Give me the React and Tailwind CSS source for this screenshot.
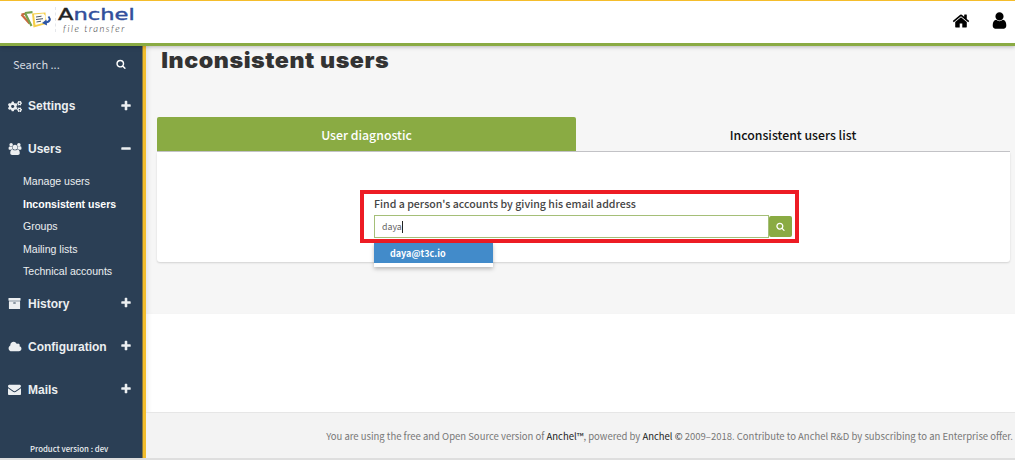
import React from "react";
import { FaCogs } from "react-icons/fa";

const PATHS = {
  plus: [1792, "M1600 736v192q0 40-28 68t-68 28h-416v416q0 40-28 68t-68 28h-192q-40 0-68-28t-28-68v-416h-416q-40 0-68-28t-28-68v-192q0-40 28-68t68-28h416v-416q0-40 28-68t68-28h192q40 0 68 28t28 68v416h416q40 0 68 28t28 68z"],
  minus: [1792, "M1600 736v192q0 40-28 68t-68 28h-1216q-40 0-68-28t-28-68v-192q0-40 28-68t68-28h1216q40 0 68 28t28 68z"],
  search: [1792, "M1216 832q0-185-131.5-316.5t-316.5-131.5-316.5 131.5-131.5 316.5 131.5 316.5 316.5 131.5 316.5-131.5 131.5-316.5zm512 832q0 52-38 90t-90 38q-54 0-90-38l-343-342q-179 124-399 124-143 0-273.5-55.5t-225-150-150-225-55.5-273.5 55.5-273.5 150-225 225-150 273.5-55.5 273.5 55.5 225 150 150 225 55.5 273.5q0 220-124 399l343 343q37 37 37 90z"],
  cloud: [2048, "M1984 1152q0 159-112.5 271.5t-271.5 112.5h-1088q-185 0-316.5-131.5t-131.5-316.5q0-132 71-241.5t187-163.5q-2-28-2-43 0-212 150-362t362-150q158 0 286.5 88t187.5 230q70-62 166-62 106 0 181 75t75 181q0 75-41 138 129 30 213 134.5t84 239.5z"],
  home: [1792, "M1472 992v480q0 26-19 45t-45 19h-384v-384h-256v384h-384q-26 0-45-19t-19-45v-480q0-1 .5-3t.5-3l575-474 575 474q1 2 1 6zm223-69l-62 74q-8 9-21 11h-3q-13 0-21-7l-692-577-692 577q-12 8-24 7-13-2-21-11l-62-74q-8-10-7-23.5t11-21.5l719-599q32-26 76-26t76 26l244 204v-195q0-14 9-23t23-9h192q14 0 23 9t9 23v408l219 182q10 8 11 21.5t-7 23.5z"],
  user: [1792, "M1536 1399q0 109-62.5 187t-150.5 78h-854q-88 0-150.5-78t-62.5-187q0-85 8.5-160.5t31.5-152 58.5-131 94-89 134.5-34.5q131 128 313 128t313-128q76 0 134.5 34.5t94 89 58.5 131 31.5 152 8.5 160.5zm-256-887q0 159-112.5 271.5t-271.5 112.5-271.5-112.5-112.5-271.5 112.5-271.5 271.5-112.5 271.5 112.5 112.5 271.5z"],
  archive: [1792, "M1088 832q0-26-19-45t-45-19h-256q-26 0-45 19t-19 45 19 45 45 19h256q26 0 45-19t19-45zm576-192v960q0 26-19 45t-45 19h-1408q-26 0-45-19t-19-45v-960q0-26 19-45t45-19h1408q26 0 45 19t19 45zm64-448v256q0 26-19 45t-45 19h-1536q-26 0-45-19t-19-45v-256q0-26 19-45t45-19h1536q26 0 45 19t19 45z"],
  envelope: [1792, "M1792 710v794q0 66-47 113t-113 47h-1472q-66 0-113-47t-47-113v-794q44 49 101 87 362 246 497 345 57 42 92.5 65.5t94.5 48 110 24.5h2q51 0 110-24.5t94.5-48 92.5-65.5q170-123 498-345 57-39 100-87zm0-294q0 79-49 151t-122 123q-376 261-468 325-10 7-42.5 31t-54 38.5-52 32.5-57.5 27-50 9h-2q-23 0-50-9t-57.5-27-52-32.5-54-38.5-42.5-31q-91-64-262-182.5t-205-142.5q-62-42-117-115.5t-55-136.5q0-78 41.5-130t118.5-52h1472q65 0 112.5 47t47.5 113z"],
  users: [2048, "M657 896q-162 5-265 128h-134q-82 0-138-40.5t-56-118.5q0-353 124-353 6 0 43.5 21t97.5 42.5 119 21.5q67 0 133-23-5 37-5 66 0 159 93 293zm1071 637q0 120-73 189.5t-194 69.5h-874q-121 0-194-69.5t-73-189.5q0-53 3.5-103.5t14-109 26.5-108.5 43-97.5 62-81 85.5-53.5 111.5-20q10 0 43 21.5t73 48 107 48 135 21.5 135-21.5 107-48 73-48 43-21.5q61 0 111.5 20t85.5 53.5 62 81 43 97.5 26.5 108.5 14 109 3.5 103.5zm-1024-1277q0 106-75 181t-181 75-181-75-75-181 75-181 181-75 181 75 75 181zm704 384q0 159-112.5 271.5t-271.5 112.5-271.5-112.5-112.5-271.5 112.5-271.5 271.5-112.5 271.5 112.5 112.5 271.5zm576 225q0 78-56 118.5t-138 40.5h-134q-103-123-265-128 93-134 93-293 0-29-5-66 66 23 133 23 59 0 119-21.5t97.5-42.5 43.5-21q124 0 124 353zm-128-609q0 106-75 181t-181 75-181-75-75-181 75-181 181-75 181 75 75 181z"],
};

function Icon({ name, className }) {
  const [width, d] = PATHS[name];
  return (
    <svg viewBox={`0 0 ${width} 1792`} fill="currentColor" className={`shrink-0 ${className}`} aria-hidden="true">
      <path d={d} />
    </svg>
  );
}

function Logo() {
  return (
    <div className="flex items-start pl-[20px] pt-[6px]">
      <svg viewBox="0 0 32 22" className="mt-px h-[22px] w-[32px]" fill="none" aria-hidden="true">
        <path d="M1.500 6.500L6 5.500M1.500 6.500L9.500 15.500" stroke="#c9693f" strokeWidth="2.200" />
        <path d="M5 5L12.500 4.200M5 5L11.500 18" stroke="#76a04c" strokeWidth="2.200" />
        <path d="M12 5.500L25.500 4.500L26 16L13.500 19.500Z" fill="#f6cf4a" />
        <path d="M14 6.500L23.500 5.500L25.500 8L25 14.500L15.500 17Z" fill="#fffef6" />
        <path d="M16 9L21.500 8.200M16 11.500L23 10.700M16.500 14L21 13.200" stroke="#4b566a" strokeWidth="1" />
        <path d="M28.500 8.500Q32 13 26 14.500" stroke="#2d55a5" strokeWidth="2" />
        <path d="M26.500 11.500L22 15L27 17.500Z" fill="#2d55a5" />
      </svg>
      <div className="ml-[3px] flex h-[25px] flex-col border-l border-dashed border-gray-200 pl-[2px]">
        <div className="h-[17px] w-[54px] origin-left scale-x-[1.46] whitespace-nowrap font-['DejaVu_Sans'] text-[15.500px] leading-[17px] text-[#314f9c] [-webkit-text-stroke:0.4px]">
          <span className="text-[#222]">A</span>nchel
        </div>
        <div className="-mt-[1px] ml-[5px] whitespace-nowrap font-['Lato'] text-[9.500px] font-light italic leading-[11px] tracking-[1.500px] text-[#333]">file transfer</div>
      </div>
    </div>
  );
}

function Section({ icon, label, open }) {
  return (
    <div className="flex h-[18px] items-center pl-[8px] pr-[10px]">
      <div className="flex w-[20px] shrink-0 items-center">{icon}</div>
      <span className="grow whitespace-nowrap text-[12px] font-bold">{label}</span>
      <Icon name={open ? "minus" : "plus"} className="mb-px h-[12px] w-[12px]" />
    </div>
  );
}

function Sidebar() {
  return (
    <aside className="flex w-[146px] shrink-0 flex-col border-r-[3px] border-[#f3bd2c] bg-[#2b3f55] font-['Liberation_Sans'] text-[#eceff1]">
      <div className="flex h-[411px] w-[143px] grow flex-col border-r border-[#8a7a3a]">
        <div className="mt-[9px] flex h-[18px] items-center justify-between pl-[13px] pr-[16px] font-['Noto_Sans_CJK_SC'] text-[11px] leading-[18px] text-[#d4dae0]">
          <span>Search ...</span>
          <Icon name="search" className="h-[10px] w-[10px] text-white" />
        </div>
        <div className="mt-[24px]"><Section icon={<FaCogs className="h-[13px] w-[14px]" />} label="Settings" /></div>
        <div className="mt-[25px]"><Section icon={<Icon name="users" className="h-[12px] w-[14px]" />} label="Users" open /></div>
        <ul className="mt-[12px] flex flex-col pl-[23px] text-[10.550px] leading-[22.500px]">
          <li>Manage users</li>
          <li className="font-bold text-white">Inconsistent users</li>
          <li>Groups</li>
          <li>Mailing lists</li>
          <li>Technical accounts</li>
        </ul>
        <div className="mt-[12px]"><Section icon={<Icon name="archive" className="h-[13px] w-[13px]" />} label="History" /></div>
        <div className="mt-[25px]"><Section icon={<Icon name="cloud" className="h-[12px] w-[14px]" />} label="Configuration" /></div>
        <div className="mt-[25px]"><Section icon={<Icon name="envelope" className="h-[13px] w-[13px]" />} label="Mails" /></div>
        <div className="mt-auto pb-px pl-[30px] font-['Noto_Sans_CJK_SC'] text-[7.800px] font-medium leading-[16px]">Product version : dev</div>
      </div>
    </aside>
  );
}

function Search() {
  return (
    <div className="relative ml-[203px] mt-[38px] h-[53px] w-[439px] border-4 border-[#ed1c24] pl-[10px] font-['Noto_Sans_CJK_SC']">
      <div className="mt-[2px] h-[19px] whitespace-nowrap text-[10.600px] font-medium leading-[16px] text-[#444]">Find a person's accounts by giving his email address</div>
      <div className="flex h-[23px]">
        <div className="flex w-[395px] items-center border border-[#a5bf78] pl-[7px] text-[8.800px] leading-[16px] text-[#666]">
          daya<span className="h-[12px] w-px bg-[#222]" />
        </div>
        <button className="mt-px flex h-[21px] w-[23px] items-center justify-center rounded-[2px] bg-[#8aab43] text-white">
          <Icon name="search" className="h-[9px] w-[9px]" />
        </button>
      </div>
      <div className="absolute left-[10px] top-[49px] h-[24px] w-[119px] bg-white shadow-[0_2px_4px_rgba(0,0,0,0.25)]">
        <div className="h-[20px] bg-[#428bca] pl-[16px] text-[9px] font-bold leading-[21px] text-white">daya@t3c.io</div>
      </div>
    </div>
  );
}

export default function App() {
  return (
    <div className="flex h-[460px] w-[1015px] flex-col overflow-hidden border-b-2 border-[#dedede] bg-white">
      <header className="relative z-10 flex h-[46px] shrink-0 justify-between border-b-[3px] border-t border-b-[#8aab43] border-t-[#f5bd2b] shadow-[0_1px_4px_rgba(0,0,0,0.250)]">
        <Logo />
        <nav className="flex items-center gap-[20px] pr-[6px] text-black">
          <Icon name="home" className="mb-[3px] h-[18px] w-[18px]" />
          <Icon name="user" className="mb-[3px] h-[19px] w-[19px]" />
        </nav>
      </header>
      <div className="flex min-h-0 grow">
        <Sidebar />
        <div className="flex grow flex-col shadow-[inset_5px_0_5px_-3px_rgba(0,0,0,0.080)]">
          <main className="h-[268px] shrink-0 bg-[#f6f6f6] pl-[11px] pr-[5px] shadow-[inset_5px_0_5px_-3px_rgba(0,0,0,0.080)]">
            <h1 className="h-[71px] w-[210px] origin-left scale-x-[1.08] whitespace-nowrap pl-[4px] font-['Inter'] text-[21.500px] font-black leading-[28px] tracking-[0.500px] text-[#333]">Inconsistent users</h1>
            <div className="flex h-[35px] border-b border-[#c4c4c8] font-['Noto_Sans_CJK_SC'] text-[12.300px] font-medium leading-[36px]">
              <div className="h-[34px] w-[419px] rounded-t-[2px] bg-[#8aab43] text-center text-white">User diagnostic</div>
              <div className="grow text-center text-[#111]">Inconsistent users list</div>
            </div>
            <section className="flow-root h-[110px] rounded-b-[3px] bg-white shadow-[0_1px_2px_rgba(0,0,0,0.150)]">
              <Search />
            </section>
          </main>
          <div className="grow" />
          <footer className="h-[46px] shrink-0 whitespace-nowrap border-t border-[#e6e6e6] bg-[#f3f3f3] pr-[2px] pt-[15px] text-right font-['Noto_Sans_CJK_SC'] text-[9.500px] leading-[16px] text-[#777]">
            You are using the free and Open Source version of <span className="text-[#222]">Anchel™</span>, powered by <span className="text-[#222]">Anchel ©</span> 2009–2018. Contribute to Anchel R&amp;D by subscribing to an Enterprise offer.
          </footer>
        </div>
      </div>
    </div>
  );
}
